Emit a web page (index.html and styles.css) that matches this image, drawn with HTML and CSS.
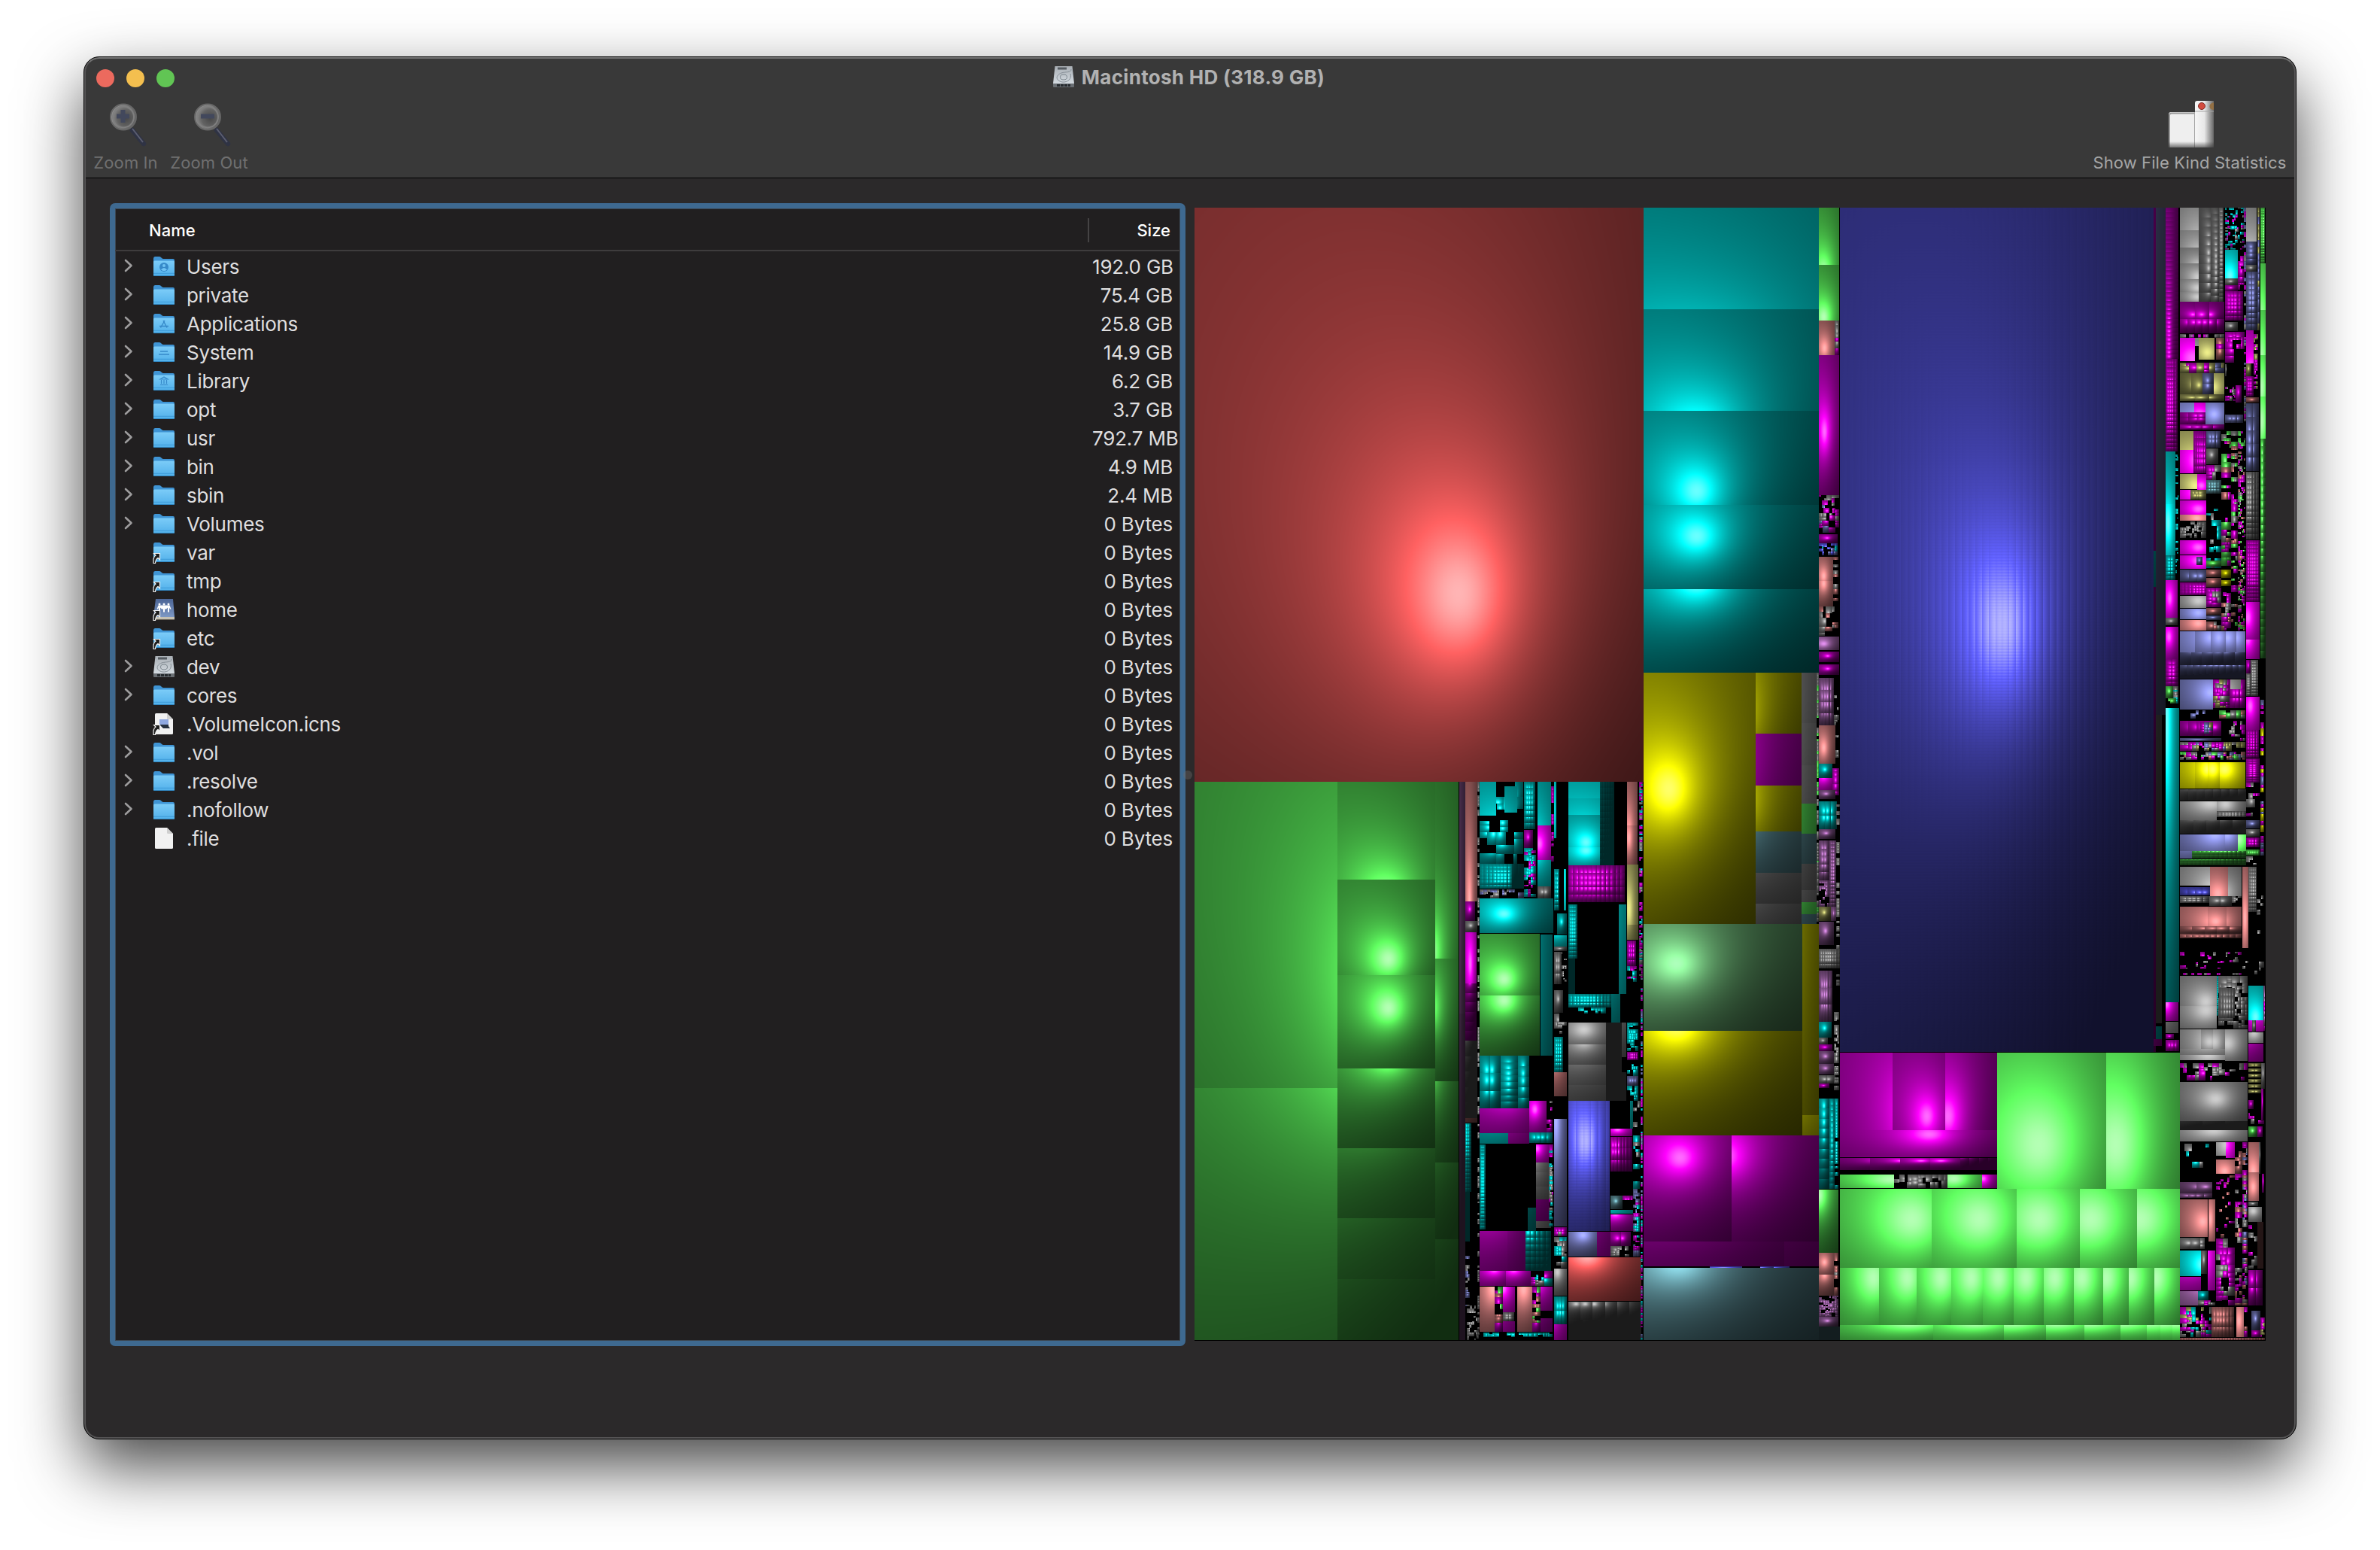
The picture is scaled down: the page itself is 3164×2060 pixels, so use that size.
FILE: index.html
```html
<!DOCTYPE html>
<html lang="en">
<head>
<meta charset="utf-8">
<title>Macintosh HD (318.9 GB)</title>
<link rel="stylesheet" href="styles.css">
</head>
<body>
<svg class="defs" width="0" height="0" aria-hidden="true">
  <defs>
    <linearGradient id="fold" x1="0" y1="0" x2="0" y2="1"><stop offset="0" stop-color="#7cccf8"/><stop offset="1" stop-color="#51b0ea"/></linearGradient>
    <linearGradient id="metal" x1="0" y1="0" x2="0" y2="1"><stop offset="0" stop-color="#a9afb5"/><stop offset="1" stop-color="#d3dae0"/></linearGradient>
    <linearGradient id="book" x1="0" y1="0" x2="0" y2="1"><stop offset="0" stop-color="#4c6596"/><stop offset="1" stop-color="#7d98c4"/></linearGradient>
    <radialGradient id="lens" cx=".6" cy=".55" r=".55"><stop offset="0" stop-color="#474747"/><stop offset=".6" stop-color="#626262"/><stop offset="1" stop-color="#8c8c8c"/></radialGradient>
    <linearGradient id="drawer" x1="0" y1="0" x2="1" y2="0"><stop offset="0" stop-color="#f6f6f6"/><stop offset=".5" stop-color="#e8e8e8"/><stop offset="1" stop-color="#666"/></linearGradient>
    <linearGradient id="foot" x1="0" y1="0" x2="0" y2="1"><stop offset="0" stop-color="#333" stop-opacity="0"/><stop offset="1" stop-color="#333" stop-opacity=".65"/></linearGradient>
    <symbol id="chev" viewBox="0 0 12 18"><path d="M2 2l7.500 7-7.500 7" fill="none" stroke="#9d9c9d" stroke-width="2.600" stroke-linecap="round" stroke-linejoin="round"/></symbol>
    <symbol id="folder" viewBox="0 0 30 30"><path d="M1 4.500Q1 2 3 2h6c2 0 3 3 5 3h13q2 0 2 2v6H1z" fill="#3f94d4"/><rect x="1" y="7.500" width="28" height="20.500" rx="1.500" fill="url(#fold)"/><path d="M1 24.300h28" stroke="#3f9cd9" stroke-width="1"/><path d="M1.500 27.500h27" stroke="#3187c2" stroke-width="1"/></symbol>
    <symbol id="alias" viewBox="0 0 30 30"><path d="M1 29.500V24q1-4 3-5l-2.500-2.500h8V25L7 22.500Q4 24 3.500 29.500z" fill="#1d1d1d" stroke="#f4f4f4" stroke-width="1.200"/></symbol>
    <symbol id="disk" viewBox="0 0 30 30"><path d="M3.500 1h23L29 24H1z" fill="url(#metal)"/><path d="M1 24h28v4q0 1-1 1H2q-1 0-1-1z" fill="#696e73"/><path d="M6 26.500h18" stroke="#252a2e" stroke-width="3" stroke-dasharray="4 1"/><rect x="7" y="2.500" width="12" height="3" fill="#555b61"/><ellipse cx="15" cy="15.500" rx="4.500" ry="3.500" fill="none" stroke="#7b858d"/><path d="M25 5c0 5-7 3-13 5-8 3-8 10 1 12 8 1 13-5 11-11" fill="none" stroke="#858e96"/></symbol>
    <symbol id="book-i" viewBox="0 0 30 30"><path d="M4 1h23l2 24H1z" fill="url(#book)"/><path d="M1 25h28v3.500H1z" fill="#c5c1b3"/><path d="M1 28.500h28" stroke="#655f55"/><g fill="#fff"><circle cx="9" cy="8" r="1.500"/><circle cx="15" cy="8" r="1.500"/><circle cx="21" cy="8" r="1.500"/><path d="M7.500 9.500h15l2 5h-1.500l-1-2v6h-2v-6l-2 2h-2v4h-2v-4h-2l-2-2v6H8v-6l-1 2H5.500z"/></g></symbol>
    <symbol id="page" viewBox="0 0 30 30"><path d="M4.500 1H19l8 8v18.500q0 1.500-1.500 1.500h-21Q3 29 3 27.500v-25Q3 1 4.500 1z" fill="#f1f1f1"/><path d="M19 1v6.500q0 1.500 1.500 1.500H27z" fill="#cfcfcf"/></symbol>
    <symbol id="glass" viewBox="0 0 50 60"><path d="M31 37l15 18" stroke="#2f3344" stroke-width="6.500" stroke-linecap="round"/><path d="M31 35l14 18" stroke="#5b5e70" stroke-width="2"/><circle cx="19" cy="19.500" r="17" fill="url(#lens)" stroke="#676767" stroke-width="2"/><circle cx="19" cy="19.500" r="14" fill="none" stroke="#7f7f7f" stroke-width="2"/></symbol>
  </defs>
</svg>
<main class="window">
  <header class="chrome">
    <div class="titlebar">
      <div class="lights"><i class="light close"></i><i class="light min"></i><i class="light max"></i></div>
      <h1 class="title"><svg class="title-icon"><use href="#disk"/></svg><span>Macintosh HD (318.9 GB)</span></h1>
    </div>
    <div class="toolbar">
      <button class="tool tool-in"><svg class="glass" viewBox="0 0 50 60"><use href="#glass"/><path d="M10 18.500h17M18.500 10v17" stroke="#42485c" stroke-width="6"/></svg><span>Zoom In</span></button>
      <button class="tool tool-out"><svg class="glass" viewBox="0 0 50 60"><use href="#glass"/><path d="M10 18.500h18" stroke="#42485c" stroke-width="6"/></svg><span>Zoom Out</span></button>
      <button class="tool tool-stats"><svg class="stats" viewBox="0 0 60 64"><path d="M0 18q0-3 3-3h31v47H0z" fill="#efefef"/><path d="M1 62V19q0-2.500 3-2.500h30" fill="none" stroke="#999" stroke-width="2"/><path d="M35 3q0-3 3-3h22v62H35z" fill="url(#drawer)"/><path d="M35 14h25M34.500 15v47" stroke="#a5a5a5"/><circle cx="44" cy="7" r="4.500" fill="#d34b3e" stroke="#812b25"/><path d="M60 2.500q-5 0-5.500 4.500t5.500 5z" fill="#937045"/><rect y="54" width="60" height="8" fill="url(#foot)"/></svg><span>Show File Kind Statistics</span></button>
    </div>
  </header>
  <section class="content">
    <div class="files">
      <div class="cols"><span class="col-name">Name</span><span class="col-size">Size</span></div>
      <div class="rows">
        <div class="row"><svg class="chev"><use href="#chev"/></svg><svg class="ico" viewBox="0 0 30 30"><use href="#folder"/><circle cx="15" cy="16" r="6" fill="#3689c9"/><circle cx="15" cy="14" r="2" fill="#70c3f4"/><path d="M11 19.500q4-5 8 0-4 3-8 0z" fill="#70c3f4"/></svg><span class="name">Users</span><span class="size">192.0 GB</span></div>
        <div class="row"><svg class="chev"><use href="#chev"/></svg><svg class="ico"><use href="#folder"/></svg><span class="name">private</span><span class="size">75.4 GB</span></div>
        <div class="row"><svg class="chev"><use href="#chev"/></svg><svg class="ico" viewBox="0 0 30 30"><use href="#folder"/><path d="M14 11l5 9.500M16 11l-5.500 9.500M9 18.500h12" stroke="#3689c9" stroke-width="1.400" fill="none"/></svg><span class="name">Applications</span><span class="size">25.8 GB</span></div>
        <div class="row"><svg class="chev"><use href="#chev"/></svg><svg class="ico" viewBox="0 0 30 30"><use href="#folder"/><path d="M10 14h10M8 18h14" stroke="#3689c9" stroke-width="1.600"/></svg><span class="name">System</span><span class="size">14.9 GB</span></div>
        <div class="row"><svg class="chev"><use href="#chev"/></svg><svg class="ico" viewBox="0 0 30 30"><use href="#folder"/><path d="M10 13l5-3 5 3zM11.500 14v5M15 14v5M18.500 14v5M10 20.500h10" stroke="#3689c9" stroke-width="1.200" fill="none"/></svg><span class="name">Library</span><span class="size">6.2 GB</span></div>
        <div class="row"><svg class="chev"><use href="#chev"/></svg><svg class="ico"><use href="#folder"/></svg><span class="name">opt</span><span class="size">3.7 GB</span></div>
        <div class="row"><svg class="chev"><use href="#chev"/></svg><svg class="ico"><use href="#folder"/></svg><span class="name">usr</span><span class="size">792.7 MB</span></div>
        <div class="row"><svg class="chev"><use href="#chev"/></svg><svg class="ico"><use href="#folder"/></svg><span class="name">bin</span><span class="size">4.9 MB</span></div>
        <div class="row"><svg class="chev"><use href="#chev"/></svg><svg class="ico"><use href="#folder"/></svg><span class="name">sbin</span><span class="size">2.4 MB</span></div>
        <div class="row"><svg class="chev"><use href="#chev"/></svg><svg class="ico"><use href="#folder"/></svg><span class="name">Volumes</span><span class="size">0 Bytes</span></div>
        <div class="row"><i class="chev"></i><svg class="ico"><use href="#folder"/><use href="#alias"/></svg><span class="name">var</span><span class="size">0 Bytes</span></div>
        <div class="row"><i class="chev"></i><svg class="ico"><use href="#folder"/><use href="#alias"/></svg><span class="name">tmp</span><span class="size">0 Bytes</span></div>
        <div class="row"><i class="chev"></i><svg class="ico"><use href="#book-i"/><use href="#alias"/></svg><span class="name">home</span><span class="size">0 Bytes</span></div>
        <div class="row"><i class="chev"></i><svg class="ico"><use href="#folder"/><use href="#alias"/></svg><span class="name">etc</span><span class="size">0 Bytes</span></div>
        <div class="row"><svg class="chev"><use href="#chev"/></svg><svg class="ico"><use href="#disk"/></svg><span class="name">dev</span><span class="size">0 Bytes</span></div>
        <div class="row"><svg class="chev"><use href="#chev"/></svg><svg class="ico"><use href="#folder"/></svg><span class="name">cores</span><span class="size">0 Bytes</span></div>
        <div class="row"><i class="chev"></i><svg class="ico" viewBox="0 0 30 30"><use href="#page"/><rect x="9" y="9" width="12" height="8" fill="#8fa8e0"/><path d="M9 16h12v2l2 3h-9z" fill="#26303f"/><use href="#alias"/></svg><span class="name">.VolumeIcon.icns</span><span class="size">0 Bytes</span></div>
        <div class="row"><svg class="chev"><use href="#chev"/></svg><svg class="ico"><use href="#folder"/></svg><span class="name">.vol</span><span class="size">0 Bytes</span></div>
        <div class="row"><svg class="chev"><use href="#chev"/></svg><svg class="ico"><use href="#folder"/></svg><span class="name">.resolve</span><span class="size">0 Bytes</span></div>
        <div class="row"><svg class="chev"><use href="#chev"/></svg><svg class="ico"><use href="#folder"/></svg><span class="name">.nofollow</span><span class="size">0 Bytes</span></div>
        <div class="row"><i class="chev"></i><svg class="ico"><use href="#page"/></svg><span class="name">.file</span><span class="size">0 Bytes</span></div>
      </div>
    </div>
    <div class="splitter"><i class="grip"></i></div>
    <canvas class="treemap" id="treemap" width="1424" height="1506"></canvas>
  </section>
</main>
<script src="treemap.js"></script>
</body>
</html>
```
FILE: styles.css
```css
* { box-sizing: border-box; }
body { margin: 0; padding: 75px 111px; width: 3164px; height: 2060px; overflow: hidden; background: #fff; font-family: Inter, "Liberation Sans", sans-serif; }
.defs { position: absolute; }
.window { width: 2942px; height: 1838px; display: flex; flex-direction: column; overflow: hidden; position: relative; border: 1px solid #000; border-radius: 21px; background: #2b292a; box-shadow: 0 36px 84px rgba(0, 0, 0, .72); }
.window::after { content: ""; position: absolute; inset: 0; border: 2px solid #565556; border-top-color: #747474; border-radius: 20px; pointer-events: none; }
.chrome { height: 161px; background: #393939; border-bottom: 1px solid #000; }
.titlebar { height: 56px; display: grid; grid-template-columns: 1fr auto 1fr; align-items: center; }
.lights { display: flex; gap: 16px; padding-left: 16px; }
.light { width: 24px; height: 24px; border-radius: 50%; }
.close { background: #ec6a5e; }
.min { background: #f4bf4f; }
.max { background: #61c554; }
.title { margin: -2px 4px 0 0; display: flex; align-items: center; gap: 9px; font-size: 26px; font-weight: 700; line-height: 32px; color: #b1b1b1; letter-spacing: .3px; }
.title-icon { width: 30px; height: 30px; margin-top: -3px; }
.toolbar { height: 104px; display: flex; align-items: flex-end; padding: 0 12px 6px 13px; }
.tool { padding: 0; border: 0; background: none; display: flex; flex-direction: column; align-items: center; font: 400 22px/28px Inter, "Liberation Sans", sans-serif; color: #707070; white-space: nowrap; letter-spacing: .1px; }
.tool-in { width: 84px; }
.tool-out { width: 104px; margin-left: 17px; }
.tool-stats { width: 258px; margin-left: auto; color: #a6a6a6; }
.glass { width: 50px; height: 60px; margin: 0 0 6px 5px; }
.tool-out .glass { margin-left: 8px; }
.stats { width: 60px; height: 64px; margin: 0 0 4px 4px; }
.content { display: flex; padding: 33px 0 0 34px; }
.files { width: 1430px; height: 1519px; border: 7px solid #3e6990; border-radius: 7px; background: #211f20; box-shadow: inset 0 0 0 1px #3b4753; }
.cols { height: 57px; border-bottom: 2px solid #3e3c3d; display: flex; align-items: center; font-size: 22px; font-weight: 500; color: #fff; }
.col-name { width: 1293px; padding: 2px 0 0 45px; }
.col-size { flex: 1; height: 32px; line-height: 32px; margin-top: 2px; padding-right: 13px; border-left: 2px solid #454344; text-align: right; }
.rows { display: flex; flex-direction: column; }
.row { height: 38px; display: flex; align-items: center; font-size: 26px; color: #dfdedf; line-height: 38px; }
.chev { width: 12px; height: 18px; margin-left: 12px; }
.ico { width: 30px; height: 30px; margin: 2px 0 0 26px; overflow: visible; }
.name { width: 1207px; padding: 4px 0 0 15px; letter-spacing: -.3px; }
.size { width: 107px; margin-left: 12px; padding-top: 4px; display: flex; justify-content: safe flex-end; white-space: nowrap; letter-spacing: -.2px; }
.name, .size { flex: none; }
.splitter { width: 12px; display: flex; align-items: center; }
.grip { width: 12px; height: 12px; margin-left: -3px; flex: none; border-radius: 50%; background: rgba(110, 105, 105, .4); }
.treemap { width: 1424px; height: 1506px; margin-top: 6px; display: block; }
```
FILE: treemap.js
```js
// Cushion treemap. Each leaf is a curved surface lit from the upper left.
const canvas = document.getElementById('treemap');
const ctx = canvas.getContext('2d');
const W = canvas.width, H = canvas.height, OX = 1588, OY = 276;
const img = ctx.createImageData(W, H), px = img.data;
for (let i = 3; i < px.length; i += 4) px[i] = 255;

// one letter per file kind
const KINDS = {
  r: [1, .38, .38], g: [.38, 1, .38], b: [.38, .38, 1], t: [0, 1, 1], m: [1, 0, 1], y: [1, 1, 0],
  s: [1, .6, .6], l: [.62, .65, 1], e: [.6, 1, .65], c: [.6, .92, .98], o: [.95, .95, .55],
  p: [.95, .6, 1], w: [1, 1, 1]
};
for (const k in KINDS) {
  const c = KINDS[k], f = 615 / (c[0] + c[1] + c[2]);
  KINDS[k] = c.map(v => v * f);
}

function shade(kind, x1, y1, x2, y2, hx, hy, gx, gy, tex) {
  if (x2 - x1 < 1 || y2 - y1 < 1 || !KINDS[kind]) return;
  const c = KINDS[kind];
  const ya = Math.round(y1), yb = Math.round(y2), xa = Math.round(x1), xb = Math.round(x2);
  for (let y = ya; y < yb; y++) for (let x = xa; x < xb; x++) {
    const X = x - OX, Y = y - OY;
    if (X < 0 || Y < 0 || X >= W || Y >= H) continue;
    let nx = (x - hx) * gx - .1, ny = (y - hy) * gy - .1;
    if (tex) { nx += ((x - xa) % tex / tex - .5) * .6; ny += ((y - ya) % 4 / 4 - .5) * .2; }
    const cos = Math.max(0, (1 - .1 * nx - .1 * ny) / Math.sqrt((nx * nx + ny * ny + 1) * 1.02));
    const I = .13 + .87 * cos;
    let v = [c[0] * I, c[1] * I, c[2] * I], over = 0, room = 0;
    for (const q of v) if (q > 255) over += q - 255; else room++;
    if (over) v = v.map(q => q > 255 ? 255 : Math.min(255, q + over / room));
    const i = (Y * W + X) * 4;
    px[i] = v[0]; px[i + 1] = v[1]; px[i + 2] = v[2];
  }
}
function leaf(kind, x1, y1, x2, y2, hx, hy, gx, gy, tex) {
  const w = x2 - x1, h = y2 - y1, area = w * h;
  const k = area > 60000 ? 1.28 : area > 8000 ? 1.5 : area > 1500 ? 2 : 1.7;
  if (hx === undefined || isNaN(hx)) { hx = x1 + w * .42; hy = y1 + h * .38; }
  if (!gx) { gx = 6 / w; gy = 6 / h; }
  shade(kind, x1, y1, x2, y2, hx, hy, gx * k, gy * k, tex);
}
// a cell's own curvature added to that of its folder
function cell(kind, x1, y1, x2, y2, hx, hy, gx, gy) {
  const ax = 3.4 / (x2 - x1), ay = 3.4 / (y2 - y1);
  shade(kind, x1, y1, x2, y2, (gx * hx + ax * (x1 + x2) / 2) / (gx + ax), (gy * hy + ay * (y1 + y2) / 2) / (gy + ay), gx + ax, gy + ay);
}
function grid(kind, x1, y1, x2, y2, cols, rows, hx, hy) {
  const w = x2 - x1, h = y2 - y1;
  if (isNaN(hx)) { hx = x1 + w * .4; hy = y1 + h * .4; }
  for (let i = 0; i < cols; i++) for (let j = 0; j < rows; j++)
    cell(kind, x1 + w * i / cols, y1 + h * j / rows, x1 + w * (i + 1) / cols, y1 + h * (j + 1) / rows, hx, hy, 7 / w, 7 / h);
}
// small files: split until the cells reach the given size; '.' in kinds leaves a gap
let seed = 7;
const rnd = () => (seed = (seed * 16807) % 2147483647) / 2147483647;
function mosaic(kinds, x1, y1, x2, y2, min) {
  const hx = x1 + (x2 - x1) * .4, hy = y1 + (y2 - y1) * .4, gx = 6 / (x2 - x1), gy = 6 / (y2 - y1);
  (function split(a, b, c, d) {
    const w = c - a, h = d - b;
    if (Math.max(w, h) > min * 2.2 || (Math.max(w, h) > min * 1.3 && rnd() < .6)) {
      const f = .3 + rnd() * .4;
      if (w > h) { const m = Math.round(a + w * f); split(a, b, m, d); split(m, b, c, d); }
      else { const m = Math.round(b + h * f); split(a, b, c, m); split(a, m, c, d); }
      return;
    }
    cell(kinds[Math.floor(rnd() * kinds.length)], a, b, c, d, hx, hy, gx, gy);
  })(x1, y1, x2, y2);
}
// shared row of leaves: edges, highlight positions
function row(kind, y1, y2, edges, lights, hy, gx, gy) {
  lights.forEach((hx, i) => shade(kind, edges[i], y1, edges[i + 1], y2, hx, hy, gx, gy));
}

const DATA = `
r 1588 276 2185 1039 1938 788 .0135 .0095
g 1588 1039 1778 1446 1852 1310 .017 .010
g 1588 1446 1778 1781 1850 1370 .013 .010
g 1778 1039 1908 1169 1843 1194 .028 .025
g 1778 1169 1908 1296 1845 1274 .038 .034
g 1778 1296 1908 1420 1845 1339 .038 .034
g 1778 1420 1908 1526 1845 1402 .034 .034
g 1778 1526 1908 1619 1832 1445 .026 .025
g 1778 1619 1908 1700 1815 1480 .022 .020
g 1778 1700 1908 1781 1800 1500 .022 .018
g 1908 1039 1939 1274 1902 1266 .05 .018
g 1908 1274 1939 1437 1900 1340 .055 .024
g 1908 1437 1939 1545 1897 1415 .055 .022
g 1908 1545 1939 1647 1890 1460 .04 .02
g 1908 1647 1939 1781 1890 1500 .035 .018
p 1940 1039 1948 1347 1934 1300 .25 .010
p 1940 1347 1948 1781 1934 1330 .3 .01
s 1948 1039 1964 1198 1953 1200 .14 .01
m 1948 1198 1961 1224
w 1948 1224 1964 1239
m 1948 1239 1963 1307 1954 1280 .15 .022
G m 1948 1307 1963 1383 1 6 1953 1280
G w 1948 1383 1964 1486 1 5 1945 1310
s 1948 1486 1964 1492 1940 1440 .1 .05
G t 1948 1493 1956 1584 2 18 1949 1500
G t 1948 1584 1954 1650 2 14 1945 1500
M lw... 1948 1656 1954 1740 3
M w. 1950 1735 1966 1781 4
M www... 1964 1039 1967 1781 4
M tttt.. 1967 1039 2025 1148 11
t 1967 1039 1989 1084 1995 1120 .03 .022
t 2000 1045 2017 1080 1990 1110 .04 .03
G t 1967 1148 2010 1181 8 6 1995 1164
G t 2010 1148 2026 1181 2 1 1990 1164
M wl.. 1967 1182 2026 1194 4
G t 2026 1039 2041 1102 3 8
m 2026 1103 2038 1127
M ttm. 2026 1127 2042 1192 4
t 2044 1039 2062 1097 2038 1135 .05 .02
m 2044 1097 2062 1143 2046 1121 .08 .04
t 2044 1143 2062 1178 2038 1125 .05 .03
G w 2044 1178 2062 1194 2 1
M m. 2062 1039 2066 1150 4
t 1967 1194 2065 1240 1999 1214 .035 .05
g 1967 1241 2047 1323 1999 1301 .035 .035
g 1967 1323 2047 1403 1999 1329 .035 .035
t 2048 1242 2064 1403 2020 1290 .05 .008
G t 1967 1403 1995 1473 2 3
G t 1995 1403 2018 1473 1 8
G t 2018 1403 2033 1473 1 5
m 2033 1463 2056 1505 2040 1474 .1 .06
M mw. 2056 1463 2064 1505 4
m 1967 1473 2007 1506 2005 1445 .03 .03
m 2007 1473 2033 1506 2005 1445 .04 .03
t 1967 1506 2005 1520 1995 1460 .03 .03
m 2005 1506 2033 1520 2000 1460 .04 .03
G t 2033 1505 2064 1519 4 1
G t 1967 1521 1975 1634 2 24
t 2031 1605 2042 1636 2000 1560 .06 .03
m 2042 1521 2059 1545 2043 1526 .1 .08
w 2042 1545 2059 1558 2036 1530 .07 .04
w 2042 1558 2059 1577 2036 1535 .07 .04
w 2042 1577 2059 1594 2036 1540 .06 .04
m 2042 1594 2060 1623 2020 1550 .05 .03
w 2042 1623 2062 1632 2030 1580 .06 .03
M mwt. 2059 1521 2065 1630 4
m 1967 1636 2004 1672 1985 1580 .03 .02
m 2004 1636 2028 1672 1985 1580 .04 .02
m 1967 1672 2004 1689 1985 1580 .03 .02
m 2004 1672 2028 1689 1985 1580 .04 .02
G t 2028 1636 2062 1689 5 6 2030 1630
m 1967 1689 2002 1709 1986 1687 .07 .09
m 2002 1689 2035 1709 2012 1687 .07 .09
M twm. 2035 1689 2064 1709 5
s 1967 1710 1987 1770 1984 1713 .06 .03
M mg.s 1987 1710 1998 1770 6
m 1998 1710 2014 1744 1998 1712 .08 .05
G w 1998 1744 2013 1756 2 2
m 1998 1756 2014 1770 1985 1720 .05 .03
s 2017 1710 2037 1770 2025 1713 .06 .03
M mg.s 2037 1710 2048 1770 6
m 2048 1710 2064 1742 2040 1705 .06 .05
m 2048 1752 2064 1770 2035 1715 .06 .04
M tt. 1967 1771 2064 1777 4
t 2066 1039 2069 1114 2060 1080 .1 .02
G t 2066 1155 2073 1210 2 8
t 2079 1155 2082 1210 2074 1170 .1 .02
t 2070 1214 2083 1242
t 2066 1243 2083 1258 2070 1235 .08 .08
w 2066 1258 2083 1264
G w 2066 1265 2076 1308 2 3
M w.. 2076 1265 2083 1310 3
w 2066 1316 2078 1346
M w. 2066 1347 2083 1374 5
G t 2066 1378 2078 1425 3 8
s 2066 1425 2083 1457 2066 1400 .07 .03
l 2066 1487 2083 1630 2068 1488 .09 .012
M wm 2066 1631 2083 1643 6
M tw. 2066 1644 2083 1685 4
w 2066 1686 2083 1722 2070 1690 .12 .07
G t 2066 1723 2083 1760 3 2
m 2066 1760 2083 1781 2060 1745 .07 .04
t 2085 1039 2127 1061 2108 1125 .02 .018
t 2085 1061 2127 1083 2108 1122 .028 .022
t 2085 1083 2127 1126 2108 1119 .04 .04
t 2085 1126 2127 1150 2108 1130 .045 .06
G t 2127 1039 2146 1150 5 14 2105 1110
G m 2085 1150 2160 1199 12 5
G t 2085 1202 2097 1274 3 14
G t 2085 1274 2094 1321 2 10 2080 1220
t 2152 1202 2162 1321 2120 1220 .04 .01
G t 2085 1321 2142 1339 12 3
M t. 2085 1339 2140 1347 4
t 2142 1321 2154 1359 2110 1280 .04 .02
w 2085 1359 2135 1388 2105 1368 .04 .055
w 2085 1388 2135 1415 2105 1383 .045 .055
w 2085 1415 2135 1442 2103 1385 .035 .035
w 2085 1442 2135 1463 2100 1385 .03 .03
G w 2135 1359 2156 1463 3 9 2100 1370
w 2156 1359 2162 1405 2130 1340 .05 .03
G w 2156 1425 2162 1463 1 2 2140 1380
T b 2085 1463 2140 1636 2107 1515 .045 .02 10
l 2085 1637 2123 1670 2104 1641 .06 .07
m 2123 1637 2141 1670 2085 1610 .035 .025
m 2141 1500 2170 1510 2150 1501 .08 .15
G m 2141 1511 2170 1557 6 3 2145 1525
t 2167 1463 2171 1500 2150 1450 .08 .03
M w... 2171 1463 2181 1486 5
M tw.. 2171 1486 2180 1580 5
c 2141 1589 2157 1607
M m. 2157 1589 2171 1607 6
t 2141 1608 2171 1613 2140 1590 .05 .05
m 2141 1614 2171 1636 2147 1613 .07 .1
G m 2141 1637 2168 1656 2 1
M w. 2141 1656 2171 1670 5
M tml. 2171 1580 2180 1670 4
r 2085 1671 2182 1729 2110 1668 .024 .03
G w 2085 1730 2182 1754 6 1 2100 1728
G w 2085 1754 2182 1781 5 2 2090 1715
s 2163 1039 2177 1097 2165 1108 .12 .022
s 2163 1097 2177 1149 2165 1113 .14 .034
o 2163 1149 2178 1229 2165 1208 .12 .022
o 2163 1229 2178 1249 2163 1208 .12 .03
G m 2163 1250 2175 1284 3 4
M tm. 2163 1284 2176 1305 4
M tt. 2163 1359 2178 1397 4
G m 2163 1398 2178 1409 5 3
M t. 2163 1409 2178 1430 4
G l 2163 1430 2178 1443 3 1
M tt. 2163 1443 2178 1463 4
M mmwt.. 2179 1039 2184 1300 3
M mmt.l. 2181 1300 2184 1781 3
t 2185 276 2418 411 2255 515 .010 .013
t 2185 411 2418 546 2255 574 .017 .019
t 2185 546 2418 671 2255 652 .025 .024
t 2185 671 2418 783 2255 712 .025 .028
t 2185 783 2418 894 2255 773 .022 .028
y 2185 894 2334 1228 2218 1048 .0235 .0175
y 2334 894 2395 975 2305 950 .03 .018
m 2334 975 2395 1044 2290 1015 .024 .014
y 2334 1044 2395 1105 2305 1065 .028 .02
c 2334 1105 2395 1160 2290 1085 .02 .02
w 2334 1160 2395 1201 2290 1105 .016 .02
w 2334 1201 2395 1228 2290 1150 .018 .02
w 2395 894 2415 961 2350 950 .034 .012
w 2395 961 2415 1017 2350 1000 .034 .012
w 2395 1017 2415 1068 2350 1040 .034 .012
g 2395 1068 2415 1108 2350 1085 .036 .012
c 2395 1108 2415 1148 2350 1085 .04 .02
w 2395 1148 2415 1183 2350 1130 .04 .02
w 2395 1183 2415 1199 2350 1160 .036 .02
g 2395 1199 2415 1215 2358 1190 .04 .03
c 2395 1215 2415 1228 2350 1190 .04 .02
M wwg. 2415 894 2418 1228 5
e 2185 1228 2396 1370 2228 1280 .022 .026
y 2185 1370 2396 1509 2228 1362 .02 .024
y 2396 1228 2418 1482 2355 1270 .036 .006
y 2396 1482 2418 1500 2350 1440 .025 .02
y 2396 1500 2418 1509 2350 1440 .025 .02
m 2185 1509 2302 1650 2233 1538 .028 .03
m 2302 1509 2418 1650 2293 1536 .026 .027
m 2185 1650 2372 1683 2232 1560 .014 .017
m 2372 1650 2418 1683 2250 1560 .014 .015
M b. 2185 1683 2418 1685 30
c 2185 1685 2418 1781 2230 1678 .018 .026
g 2418 276 2445 352 2424 362 .06 .026
g 2418 352 2445 426 2424 421 .06 .032
s 2418 426 2439 472 2425 462 .1 .05
M mww 2439 426 2445 472 7
m 2418 472 2445 658 2425 573 .08 .021
M mw.l. 2418 658 2445 708 5
m 2418 710 2443 722
M bblt. 2418 722 2443 738 4
s 2418 740 2437 772 2424 765 .12 .06
s 2418 772 2437 806 2424 775 .12 .06
M ws. 2437 740 2444 806 6
M ws.. 2418 806 2444 845 6
p 2418 846 2445 864 2424 855 .1 .15
m 2418 866 2445 880
m 2418 883 2445 897
G p 2418 901 2438 964 4 4
M w.. 2438 901 2445 964 4
s 2418 964 2440 1015 2424 993 .12 .05
M mw. 2440 964 2445 1015 6
t 2418 1015 2436 1034
m 2418 1034 2436 1050 2424 1030 .1 .08
M mp. 2436 1015 2445 1065 5
p 2418 1050 2440 1062
G t 2418 1065 2442 1102 3 2
p 2418 1102 2440 1115
G p 2418 1117 2432 1170 2 5
G p 2432 1117 2441 1205 2 18
M pp. 2418 1170 2432 1205 4
M ww.. 2441 1065 2446 1310 4
o 2418 1205 2434 1224
G p 2434 1205 2441 1224 3 1
p 2418 1225 2438 1256
G w 2418 1261 2446 1287 8 4
G p 2418 1290 2436 1358 4 3
t 2418 1358 2435 1379
w 2418 1379 2430 1388
m 2418 1388 2436 1397
p 2418 1397 2438 1414
p 2418 1414 2438 1428
G w 2418 1429 2440 1440 2 1
m 2418 1440 2432 1446
M ww. 2438 1340 2445 1455 4
G t 2418 1460 2432 1580 1 9 2424 1480
G t 2432 1460 2439 1580 1 16
M tt. 2439 1460 2444 1580 4
g 2418 1581 2444 1665 2418 1588 .06 .03
s 2418 1665 2438 1694 2425 1677 .12 .09
s 2418 1694 2438 1722 2425 1694 .12 .09
M ws. 2438 1665 2444 1722 5
M pp. 2418 1722 2444 1750 3
p 2418 1750 2444 1763
G c 2418 1763 2446 1781 3 1 2400 1740
T b 2446 276 2863 1398 2660 828 .021 .0105 9
m 2863 276 2866 1398 2830 700 .09 .006
l 2866 276 2879 950 2825 560 .08 .006
w 2866 950 2874 1360 2825 830 .08 .006
t 2866 1364 2874 1381 2830 1330 .08 .02
m 2863 1381 2874 1390 2830 1330 .08 .02
t 2863 732 2866 780 2830 700 .08 .02
G m 2879 276 2896 477 1 34 2881 460
G m 2879 477 2895 600 4 22 2884 530
t 2879 600 2892 670 2882 700 .12 .02
t 2879 670 2892 738 2882 695 .12 .02
G t 2879 738 2892 771 2 6
M t.. 2892 600 2896 771 3
m 2879 771 2895 821 2884 795 .12 .04
w 2879 821 2895 831
m 2879 833 2896 876 2883 846 .12 .05
G m 2879 876 2896 912 2 6
g 2879 912 2889 928
M tw. 2889 912 2896 935 4
M wg. 2879 928 2893 935 4
t 2879 941 2897 1332 2880 960 .085 .005
m 2879 1332 2896 1357 2880 1334 .1 .06
w 2879 1358 2896 1373 2860 1335 .04 .03
m 2879 1374 2890 1381
G m 2879 1382 2897 1397 3 1
m 2446 1399 2516 1502 2543 1483 .022 .013
m 2516 1399 2586 1502 2561 1483 .036 .022
m 2586 1399 2655 1502 2589 1483 .033 .017
m 2446 1502 2655 1536 2564 1507 .019 .04
m 2446 1536 2655 1538 2550 1490 .02 .03
G m 2446 1539 2606 1555 4 1 2568 1540
G m 2606 1539 2655 1555 4 1 2600 1530
g 2446 1561 2518 1579 2515 1567 .02 .06
M www. 2518 1561 2589 1579 7
g 2589 1561 2635 1579 2597 1566 .035 .06
m 2635 1561 2655 1579 2636 1566 .1 .1
g 2655 1399 2800 1580 2710 1521 .0145 .011
g 2800 1399 2898 1580 2812 1521 .019 .010
w 2898 276 2923 306 2923 330 .035 .018
w 2898 306 2923 329 2922 340 .04 .03
w 2898 329 2923 350 2922 355 .05 .05
w 2898 350 2923 371 2922 368 .05 .06
w 2898 371 2923 388 2922 382 .05 .08
w 2898 388 2923 401 2922 394 .05 .09
G w 2923 276 2939 401 1 10 2938 350
G w 2939 276 2950 401 1 15 2946 350
G w 2950 276 2956 401 2 22
G m 2898 401 2957 424 3 1 2925 420
G m 2898 424 2957 443 6 1 2925 425
M mwp.. 2898 444 2957 449 4
m 2898 449 2918 480 2915 476 .03 .03
w 2918 449 2923 460 2915 476 .04 .04
o 2923 449 2944 478 2934 468 .06 .06
M mso 2946 449 2957 478 10
M oolm 2898 482 2957 496 8
G o 2898 496 2928 524 2 1 2925 512
G l 2928 496 2943 524 1 2
o 2943 496 2957 524 2941 514 .06 .06
G o 2898 524 2957 533 3 1
l 2898 535 2917 548 2925 556 .03 .04
G m 2898 548 2932 564 3 2 2924 552
m 2917 535 2932 548 2924 550 .05 .06
l 2932 535 2957 564 2943 550 .06 .06
G m 2898 564 2957 571 4 1
o 2898 573 2916 598 2920 612 .03 .03
m 2898 598 2916 629 2920 612 .04 .03
G m 2916 573 2933 629 6 6 2925 605
o 2898 630 2921 650 2918 645 .05 .05
m 2921 630 2933 652 2926 645 .08 .08
m 2898 651 2912 664 2920 655 .04 .05
M oo 2912 651 2933 664 8
m 2898 665 2933 684 2922 676 .05 .07
s 2898 684 2933 692 2920 688 .05 .08
M ww. 2898 693 2933 715 4
m 2898 718 2933 737 2922 727 .05 .07
m 2898 738 2933 756 2922 745 .05 .07
l 2920 740 2928 751
G l 2898 757 2933 773 3 1 2922 765
G m 2898 774 2933 791 7 3 2922 783
w 2898 792 2933 808 2922 798 .05 .07
l 2898 809 2933 823 2922 814 .05 .07
s 2898 824 2933 838 2922 828 .05 .07
G l 2933 573 2952 595 3 2
w 2933 596 2949 617
M mmw. 2933 618 2953 638 7
G c 2933 638 2953 656 4 3
M w.t.. 2933 676 2953 755 6
g 2933 745 2953 753
s 2933 757 2953 767
s 2933 768 2953 780
M mmmw 2933 781 2953 807 8
s 2933 808 2953 817
l 2933 818 2953 824
M ws. 2933 826 2953 838 6
M mmwg.s.. 2953 573 2966 752 6
y 2953 757 2966 768
y 2953 771 2966 779
M mms.w. 2953 780 2966 838 5
M mms...gw. 2966 573 2975 838 5
M mwsg...m. 2975 573 2985 838 3
l 2898 839 2918 867 2940 847 .025 .03
l 2918 839 2939 867 2938 847 .05 .05
l 2939 839 2959 867 2949 847 .07 .05
l 2959 839 2973 867 2961 847 .06 .05
l 2973 839 2985 867 2971 847 .06 .05
G l 2898 867 2985 884 6 1 2948 860
G l 2898 884 2985 896 10 1 2948 880
G l 2898 896 2985 902 9 1 2948 885
l 2898 903 2942 943 2938 920 .035 .035
M mmow 2942 903 2964 941 6
G m 2964 903 2985 941 3 3
w 2965 903 2979 916 2955 920 .04 .04
M l... 2898 944 2950 955 4
M gsw. 2950 944 2985 955 7
G m 2898 958 2953 978 5 1 2935 965
M mol 2925 960 2942 975 5
M m.w.. 2953 958 2985 985 5
l 2898 981 2953 985
M mmlow. 2898 986 2985 998 5
M smw.gl. 2898 999 2985 1010 4
y 2898 1013 2918 1031 2940 1021 .035 .04
y 2898 1031 2918 1048 2940 1021 .035 .04
y 2918 1013 2935 1048 2934 1022 .06 .05
y 2935 1013 2951 1048 2941 1022 .06 .05
y 2951 1013 2985 1048 2957 1022 .045 .045
G w 2898 1049 2986 1064 8 1 2940 1040
w 2898 1065 2947 1090 2938 1067 .03 .05
w 2947 1065 2986 1078 2958 1068 .05 .06
G w 2947 1078 2986 1086 8 2
G w 2898 1090 2986 1108 5 1 2940 1080
l 2898 1109 2958 1131 2944 1109 .03 .04
l 2958 1109 2975 1131 2960 1109 .05 .05
g 2975 1109 2986 1131 2976 1115 .07 .05
l 2898 1131 2914 1141 2910 1110 .04 .04
G g 2914 1131 2986 1141 12 2 2950 1128
G g 2898 1142 2986 1150 16 2 2940 1138
w 2898 1152 2938 1177 2942 1180 .03 .03
s 2938 1152 2962 1191 2948 1187 .05 .04
w 2962 1152 2980 1191 2953 1187 .04 .04
G b 2898 1179 2938 1190 4 1 2926 1186
G w 2898 1191 2937 1200 5 2
G w 2937 1191 2967 1204 2 1
M w. 2967 1191 2980 1200 4
s 2898 1205 2935 1231 2942 1224 .035 .05
s 2935 1205 2960 1231 2945 1224 .05 .06
s 2960 1205 2980 1231 2952 1224 .05 .06
G s 2898 1231 2980 1241 5 1 2945 1232
G s 2898 1241 2980 1247 10 1
M m.....w..... 2898 1265 2980 1288 4
M mmw.. 2898 1293 2980 1296 4
s 2981 1152 2989 1260 2984 1220 .16 .02
M w... 2981 1261 2989 1296 4
w 2898 1297 2947 1337 2932 1331 .035 .035
w 2898 1337 2947 1367 2932 1342 .035 .04
G t 2947 1297 2949 1350 1 20
M www. 2949 1297 2988 1367 6
G w 2950 1313 2971 1353 5 4 2960 1335
w 2898 1368 2926 1394 2937 1384 .035 .035
w 2926 1368 2942 1394 2937 1384 .06 .06
w 2942 1368 2958 1394 2943 1384 .06 .05
w 2958 1368 2988 1410 2960 1386 .045 .045
w 2898 1394 2958 1402 2935 1385 .03 .05
w 2898 1402 2958 1409 2935 1402 .03 .06
M ww..m. 2898 1413 2988 1436 6
w 2898 1438 2988 1490 2945 1460 .03 .04
G w 2898 1490 2988 1502 3 1 2940 1475
w 2898 1502 2988 1517 2942 1502 .025 .06
M w...........t 2898 1520 2946 1556 5
G p 2898 1571 2941 1586 2 1 2933 1576
G p 2898 1586 2941 1592 4 1
s 2898 1594 2935 1644 2928 1623 .045 .035
s 2936 1594 2945 1650 2938 1620 .14 .035
M mmw. 2898 1645 2945 1660 8
t 2898 1662 2926 1696 2927 1680 .05 .045
w 2926 1662 2934 1693
m 2935 1662 2945 1715 2930 1670 .07 .025
m 2898 1697 2926 1715 2915 1675 .04 .04
p 2898 1716 2922 1735 2930 1705 .04 .04
t 2922 1716 2936 1728
M mw. 2922 1728 2945 1735 5
M om.wmt. 2898 1737 2940 1777 5
w 2946 1518 2959 1536 2960 1520 .05 .04
m 2959 1518 2971 1539 2957 1520 .07 .04
s 2946 1541 2971 1560 2957 1556 .06 .06
M ss. 2971 1530 2981 1560 6
M m.......s.. 2946 1562 2971 1645 4
M mms...w 2971 1560 2981 1735 5
M mmw.sl. 2981 1518 2988 1735 4
M mmmw.. 2946 1646 2971 1735 7
G s 2940 1737 2970 1777 6 3 2950 1750
s 2973 1737 2983 1777 2976 1755 .12 .04
M s.m. 2983 1737 2988 1777 4
G s 2898 1778 3011 1781 30 1
M tt...mw. 2958 276 2984 332 3
t 2958 332 2975 370 2964 366 .07 .04
w 2958 370 2975 379
M mm. 2975 332 2984 385 6
m 2958 379 2975 387
G m 2958 387 2982 426 4 6
w 2958 428 2975 440
M mmm. 2958 441 2984 482 7
w 2958 484 2960 500
M w.m.. 2958 510 2972 533 3
m 2972 512 2980 535
M mlw.. 2983 276 2986 560 4
G l 2958 551 2982 562 3 1
w 2986 276 3000 321 2992 345 .04 .018
G l 2986 321 3000 352 1 4
w 2986 352 3000 361
G l 2986 361 3001 439 2 10
M llo 3001 276 3004 439 8
m 2986 439 2996 483 2992 490 .07 .03
M mmo. 2996 439 3002 525 4
o 2986 483 2993 500
G m 2986 500 2996 527 2 5
s 2986 528 3003 535
G l 2986 536 3003 626 2 5 2990 590
G w 2986 627 3003 717 4 12 2989 660
G m 2986 718 3004 800 5 16
m 2986 800 3004 850 2988 820 .09 .035
m 2986 850 3004 876 2988 848 .09 .04
m 2986 877 2992 895
G w 2992 877 3002 925 4 12
G w 2986 895 2992 925 2 8
m 2986 926 3004 970 2991 938 .1 .04
G m 2986 970 3003 1007 4 8
G m 2986 1008 3004 1040 2 10
M mwl...g 2986 1040 3004 1085 6
l 2986 1090 3004 1101
w 2986 1102 3004 1112
G m 2986 1113 3004 1126 3 2
G g 2986 1129 3004 1137 5 1
M m.w.... 2986 1138 3010 1150 4
G g 3005 276 3011 350 3 20
g 3005 350 3012 412 3006 430 .1 .018
g 3005 412 3012 472 3006 480 .1 .018
g 3005 472 3012 527 3006 515 .1 .022
g 3005 527 3012 583 3006 560 .1 .022
G g 3005 583 3012 875 1 28 3006 640
M mmmy.l 3005 930 3010 1140 5
G w 2989 1152 3000 1212 6 12
M w.. 3000 1190 3009 1216 4
M w......... 2989 1216 3010 1300 4
t 2989 1310 3009 1356 2998 1351 .07 .04
M pm 3009 1310 3011 1370 8
m 2989 1356 3009 1371 2997 1345 .06 .05
w 2994 1356 2999 1372
w 2989 1372 3009 1386 2996 1371 .07 .06
m 2989 1387 3009 1411 2985 1365 .05 .04
G o 2989 1413 3006 1418 2 1
G o 2989 1420 3006 1425 2 1
G o 2989 1427 3006 1432 2 1
G o 2989 1434 3006 1439 2 1
G o 2989 1441 3006 1446 2 1
G o 2989 1448 3006 1453 2 1
w 3006 1413 3011 1447
m 2989 1462 2996 1474
M w.m.. 2989 1474 3010 1494 5
m 3006 1447 3009 1490
g 2989 1497 3001 1511
m 3001 1497 3008 1511
s 2989 1518 3003 1558 2995 1556 .08 .035
s 2989 1558 3003 1596 2995 1577 .11 .05
w 3003 1518 3005 1560
w 2989 1597 3002 1603
w 2989 1604 3007 1624 2995 1609 .1 .1
m 3007 1560 3010 1585
M mw... 2989 1626 3001 1686 5
G s 3001 1624 3009 1686 1 5 2990 1600
G m 2989 1688 3008 1735 2 2 2993 1700
l 2993 1742 3005 1768
m 2993 1768 3005 1777
M om. 3005 1745 3011 1777 4
`;
for (const line of DATA.trim().split('\n')) {
  const f = line.split(' ');
  if (f[0] === 'G') grid(f[1], ...f.slice(2, 8).map(Number), Number(f[8] || NaN), Number(f[9] || NaN));
  else if (f[0] === 'M') mosaic(f[1], ...f.slice(2).map(Number));
  else if (f[0] === 'T') leaf(f[1], ...f.slice(2).map(Number));
  else leaf(f[0], ...f.slice(1).map(Number));
}
row('g', 1580, 1685, [2446, 2568, 2681, 2765, 2841, 2898], [2541, 2631, 2711, 2779, 2844], 1620, .027, .027);
row('g', 1685, 1761, [2446, 2498, 2548, 2594, 2636, 2677, 2717, 2757, 2796, 2830, 2864, 2898],
  [2490, 2535, 2580, 2620, 2656, 2693, 2731, 2767, 2799, 2831, 2865], 1698, .055, .035);
row('g', 1761, 1781, [2446, 2570, 2664, 2720, 2771, 2819, 2854, 2872, 2888, 2898],
  [2538, 2625, 2674, 2732, 2776, 2820, 2855, 2873, 2889], 1757, .028, .1);
ctx.putImageData(img, 0, 0);
```
